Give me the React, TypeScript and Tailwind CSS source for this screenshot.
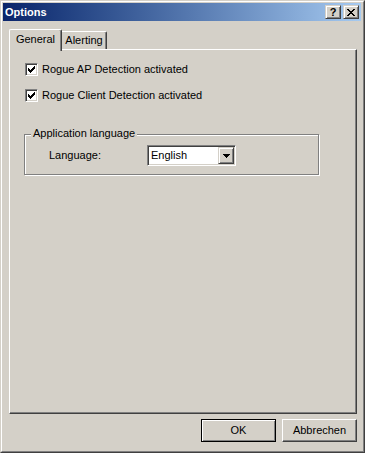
const CheckMark = () => (
    <svg width="7" height="7" viewBox="0 0 7 7" shapeRendering="crispEdges">
        <path
            fill="#000"
            d="M0 2h1v3H0z M1 3h1v3H1z M2 4h1v3H2z M3 3h1v3H3z M4 2h1v3H4z M5 1h1v3H5z M6 0h1v3H6z"
        />
    </svg>
);

const Checkbox = () => (
    <div className="flex h-[13px] w-[13px] items-center justify-center border border-b-white border-l-[#808080] border-r-white border-t-[#808080] bg-white shadow-[inset_1px_1px_0_#404040,inset_-1px_-1px_0_#d4d0c8]">
        <CheckMark />
    </div>
);

const CheckRow = ({ label, className }: { label: string; className?: string }) => (
    <div className={`ml-[15px] flex h-[13px] items-center ${className ?? ''}`}>
        <Checkbox />
        <span className="ml-[4px] whitespace-nowrap">{label}</span>
    </div>
);

const CaptionButton = ({ children }: { children: React.ReactNode }) => (
    <div className="flex h-[14px] w-[16px] items-center justify-center border border-b-[#404040] border-l-[#d4d0c8] border-r-[#404040] border-t-[#d4d0c8] bg-[#d4d0c8] shadow-[inset_1px_1px_0_#fff,inset_-1px_-1px_0_#808080]">
        {children}
    </div>
);

export default function App() {
    return (
        <div className="h-[453px] w-[365px] border border-b-[#404040] border-l-[#d4d0c8] border-r-[#404040] border-t-[#d4d0c8] bg-[#d4d0c8] font-['Liberation_Sans',Arial,sans-serif] text-[11px] leading-[13px] text-black">
            <div className="flex h-full flex-col border border-b-[#808080] border-l-white border-r-[#808080] border-t-white pb-px pl-px pr-[2px] pt-px">
                {/* title bar */}
                <div className="flex h-[18px] shrink-0 items-center bg-gradient-to-r from-[#0a246a] to-[#a6caf0] pl-[2px] pr-[2px]">
                    <span className="text-[11px] font-bold text-white">Options</span>
                    <div className="ml-auto flex gap-[2px]">
                        <CaptionButton>
                            <span className="text-[11px] font-bold leading-[11px]">?</span>
                        </CaptionButton>
                        <CaptionButton>
                            <svg width="8" height="7" viewBox="0 0 8 7" shapeRendering="crispEdges">
                                <path
                                    fill="#000"
                                    d="M0 0h2v1H0z M6 0h2v1H6z M1 1h2v1H1z M5 1h2v1H5z M2 2h4v1H2z M3 3h2v1H3z M2 4h4v1H2z M1 5h2v1H1z M5 5h2v1H5z M0 6h2v1H0z M6 6h2v1H6z"
                                />
                            </svg>
                        </CaptionButton>
                    </div>
                </div>

                {/* tabs */}
                <div className="ml-[6px] mt-[8px] flex h-[20px] shrink-0 items-end">
                    <div className="relative z-10 -mb-[2px] flex h-[22px] w-[53px] justify-center rounded-tl-[2px] rounded-tr-[2px] border-l border-r border-t border-l-white border-r-[#404040] border-t-white bg-[#d4d0c8] pt-[3px] shadow-[inset_-1px_0_0_#808080]">
                        General
                    </div>
                    <div className="flex h-[18px] w-[45px] justify-center rounded-tr-[2px] border-r border-t border-r-[#404040] border-t-white pt-[2px] shadow-[inset_-1px_0_0_#808080]">
                        Alerting
                    </div>
                </div>

                {/* panel */}
                <div className="ml-[6px] mr-[4px] flex h-[365px] shrink-0 flex-col border border-b-[#404040] border-l-white border-r-[#404040] border-t-white shadow-[inset_-1px_-1px_0_#808080]">
                    <CheckRow label="Rogue AP Detection activated" className="mt-[13px]" />
                    <CheckRow label="Rogue Client Detection activated" className="mt-[13px]" />

                    <div className="relative ml-[14px] mt-[32px] w-[295px] border border-[#808080] shadow-[inset_1px_1px_0_#fff,1px_1px_0_#fff]">
                        <span className="absolute -top-[8px] left-[6px] bg-[#d4d0c8] px-[2px] whitespace-nowrap">
                            Application language
                        </span>
                        <div className="flex items-center pb-[8px] pl-[24px] pt-[10px]">
                            <span className="w-[98px]">Language:</span>
                            <div className="flex h-[21px] w-[89px] border border-b-white border-l-[#808080] border-r-white border-t-[#808080] bg-white p-px shadow-[inset_1px_1px_0_#404040,inset_-1px_-1px_0_#d4d0c8]">
                                <span className="flex-1 pl-[2px] pt-[2px]">English</span>
                                <div className="flex h-[17px] w-[16px] items-center justify-center border border-b-[#404040] border-l-[#d4d0c8] border-r-[#404040] border-t-[#d4d0c8] bg-[#d4d0c8] shadow-[inset_1px_1px_0_#fff,inset_-1px_-1px_0_#808080]">
                                    <svg width="7" height="4" viewBox="0 0 7 4" shapeRendering="crispEdges">
                                        <path fill="#000" d="M0 0h7v1H0z M1 1h5v1H1z M2 2h3v1H2z M3 3h1v1H3z" />
                                    </svg>
                                </div>
                            </div>
                        </div>
                    </div>
                </div>

                {/* buttons */}
                <div className="mr-[4px] mt-[5px] flex shrink-0 justify-end gap-[6px]">
                    <button className="flex h-[23px] w-[75px] items-center justify-center border border-black bg-[#d4d0c8] shadow-[inset_1px_1px_0_#fff,inset_-1px_-1px_0_#808080]">
                        OK
                    </button>
                    <button className="flex h-[23px] w-[75px] items-center justify-center border border-b-[#404040] border-l-white border-r-[#404040] border-t-white bg-[#d4d0c8] shadow-[inset_-1px_-1px_0_#808080]">
                        Abbrechen
                    </button>
                </div>
            </div>
        </div>
    );
}
